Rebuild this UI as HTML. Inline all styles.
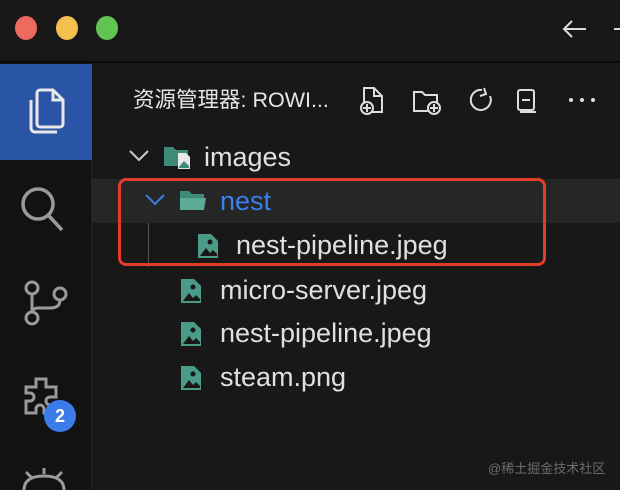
<!DOCTYPE html>
<html><head><meta charset="utf-8"><style>
*{margin:0;padding:0;box-sizing:border-box}
body{width:620px;height:490px;background:#181818;position:relative;overflow:hidden;font-family:"Liberation Sans","Noto Sans CJK SC",sans-serif;color:#e0e0e0}
.title{position:absolute;left:0;top:0;width:620px;height:63px;background:#181818;border-bottom:2px solid #0a0a0a}
.dot{position:absolute;top:16px;width:22px;height:24px;border-radius:50%}
.act{position:absolute;left:0;top:63px;width:92px;height:427px;background:#121212;border-right:1px solid #222}
.actsel{position:absolute;left:0;top:64px;width:92px;height:96px;background:#2a54a6}
.row{position:absolute;left:0;width:620px;height:44px;font-size:27px;line-height:44px}
.lbl{position:absolute;top:0}
svg{position:absolute}
</style></head><body>
<div class="title">
 <div class="dot" style="left:15px;background:#ec6a5e"></div>
 <div class="dot" style="left:56px;background:#f4bf4f"></div>
 <div class="dot" style="left:96px;background:#61c554"></div>
 <svg style="left:560px;top:18px" width="60" height="22" viewBox="0 0 60 22"><path d="M26 11H4M12 3L4 11l8 8" stroke="#ddd" stroke-width="2" fill="none"/><path d="M54 11h6" stroke="#ddd" stroke-width="2"/></svg>
</div>
<div class="act"></div>
<div class="actsel"></div>
<svg style="left:24px;top:86px" width="44" height="52" viewBox="0 0 44 52"><path d="M16 4h13l10 10v24a3 3 0 0 1-3 3H16a3 3 0 0 1-3-3V7a3 3 0 0 1 3-3zM29 4v10h10" stroke="#e8e8e8" stroke-width="3" fill="none"/><path d="M7 14v28a4 4 0 0 0 4 4h22" stroke="#e8e8e8" stroke-width="3" fill="none"/></svg>
<svg style="left:18px;top:182px" width="50" height="52" viewBox="0 0 50 52"><circle cx="20" cy="22" r="15" stroke="#9a9a9a" stroke-width="3.5" fill="none"/><path d="M31 34l13 14" stroke="#9a9a9a" stroke-width="3.5"/></svg>
<svg style="left:20px;top:278px" width="48" height="52" viewBox="0 0 48 52"><circle cx="12" cy="10" r="6" stroke="#9a9a9a" stroke-width="3" fill="none"/><circle cx="12" cy="40" r="6" stroke="#9a9a9a" stroke-width="3" fill="none"/><circle cx="40" cy="16" r="6" stroke="#9a9a9a" stroke-width="3" fill="none"/><path d="M12 16v18M40 22c0 6-4 8-10 8H18c-4 0-6 2-6 4" stroke="#9a9a9a" stroke-width="3" fill="none"/></svg>
<svg style="left:20px;top:375px" width="44" height="50" viewBox="0 0 44 50"><path d="M16 4h10v8h10v10h-6a4 4 0 0 0 0 8h6v8H24v-4a4 4 0 0 0-8 0v4H6v-12h4a4 4 0 0 0 0-8H6V12h10z" stroke="#9a9a9a" stroke-width="3" fill="none"/></svg>
<div style="position:absolute;left:44px;top:400px;width:32px;height:32px;border-radius:50%;background:#3b7bea;color:#fff;font-size:18px;font-weight:bold;text-align:center;line-height:32px">2</div>
<svg style="left:20px;top:466px" width="48" height="24" viewBox="0 0 48 24"><path d="M4 24c0-10 8-14 20-14s20 4 20 14M6 6l6 6M42 6l-6 6M24 2v6" stroke="#9a9a9a" stroke-width="3" fill="none"/></svg>

<div style="position:absolute;left:133px;top:85px;font-size:21.5px;line-height:30px;color:#e6e6e6">资源管理器: ROWI...</div>
<svg style="left:358px;top:84px" width="240" height="34" viewBox="0 0 240 34"><g stroke="#ddd" stroke-width="2" fill="none">
<path d="M6 4h10l8 8v16h-18z M16 4v8h8"/><circle cx="9" cy="24" r="6" fill="#181818"/><path d="M9 20v8M5 24h8"/>
<path d="M56 8h8l3 3h12v16h-23z"/><circle cx="76" cy="24" r="6" fill="#181818"/><path d="M76 20v8M72 24h8"/>
<path d="M124 6a10 10 0 1 0 8 6M126 4l2 6-6 2"/>
<rect x="160" y="6" width="16" height="20" rx="2"/><path d="M164 16h8M162 28h16"/>
</g><g fill="#ddd"><circle cx="213" cy="16" r="2"/><circle cx="224" cy="16" r="2"/><circle cx="235" cy="16" r="2"/></g></svg>

<div style="position:absolute;left:92px;top:179px;width:528px;height:44px;background:#262626"></div>
<div style="position:absolute;left:148px;top:223px;width:1px;height:44px;background:#555"></div>

<div class="row" style="top:135px">
 <svg style="left:128px;top:14px" width="22" height="14" viewBox="0 0 22 14"><path d="M2 2l9 9 9-9" stroke="#ccc" stroke-width="2" fill="none"/></svg>
 <svg style="left:162px;top:10px" width="30" height="26" viewBox="0 0 30 26"><path d="M2 2h9l3 3h12v16H2z" fill="#3d8a79"/><path d="M16 8h8l4 4v12H16z" fill="#e8e8e8"/><path d="M17 22l5-6 5 5v2H17z" fill="#3d8a79"/></svg>
 <span class="lbl" style="left:204px">images</span>
</div>
<div class="row" style="top:179px">
 <svg style="left:144px;top:14px" width="22" height="14" viewBox="0 0 22 14"><path d="M2 2l9 9 9-9" stroke="#3a7de0" stroke-width="2" fill="none"/></svg>
 <svg style="left:178px;top:10px" width="30" height="24" viewBox="0 0 30 24"><path d="M2 2h9l3 3h12v4H2z" fill="#3d8a79"/><path d="M2 9h26l-2 12H2z" fill="#5bab97"/></svg>
 <span class="lbl" style="left:220px;color:#3b7eed">nest</span>
</div>
<div class="row" style="top:223px">
 <svg style="left:197px;top:10px" width="22" height="26" viewBox="0 0 22 26"><path d="M1 1h13l7 7v17H1z" fill="#4a9b87"/><circle cx="13" cy="9" r="2.5" fill="#181818"/><path d="M3 23l6-8 4 5 3-3 4 4v2z" fill="#181818"/></svg>
 <span class="lbl" style="left:236px">nest-pipeline.jpeg</span>
</div>
<div class="row" style="top:268px">
 <svg style="left:180px;top:10px" width="22" height="26" viewBox="0 0 22 26"><path d="M1 1h13l7 7v17H1z" fill="#4a9b87"/><circle cx="13" cy="9" r="2.5" fill="#181818"/><path d="M3 23l6-8 4 5 3-3 4 4v2z" fill="#181818"/></svg>
 <span class="lbl" style="left:220px">micro-server.jpeg</span>
</div>
<div class="row" style="top:311px">
 <svg style="left:180px;top:10px" width="22" height="26" viewBox="0 0 22 26"><path d="M1 1h13l7 7v17H1z" fill="#4a9b87"/><circle cx="13" cy="9" r="2.5" fill="#181818"/><path d="M3 23l6-8 4 5 3-3 4 4v2z" fill="#181818"/></svg>
 <span class="lbl" style="left:220px">nest-pipeline.jpeg</span>
</div>
<div class="row" style="top:355px">
 <svg style="left:180px;top:10px" width="22" height="26" viewBox="0 0 22 26"><path d="M1 1h13l7 7v17H1z" fill="#4a9b87"/><circle cx="13" cy="9" r="2.5" fill="#181818"/><path d="M3 23l6-8 4 5 3-3 4 4v2z" fill="#181818"/></svg>
 <span class="lbl" style="left:220px">steam.png</span>
</div>

<div style="position:absolute;left:118px;top:178px;width:428px;height:88px;border:3px solid #e23d2a;border-radius:8px"></div>
<div style="position:absolute;left:488px;top:458px;font-size:13px;color:#6c6c6c">@稀土掘金技术社区</div>
</body></html>
